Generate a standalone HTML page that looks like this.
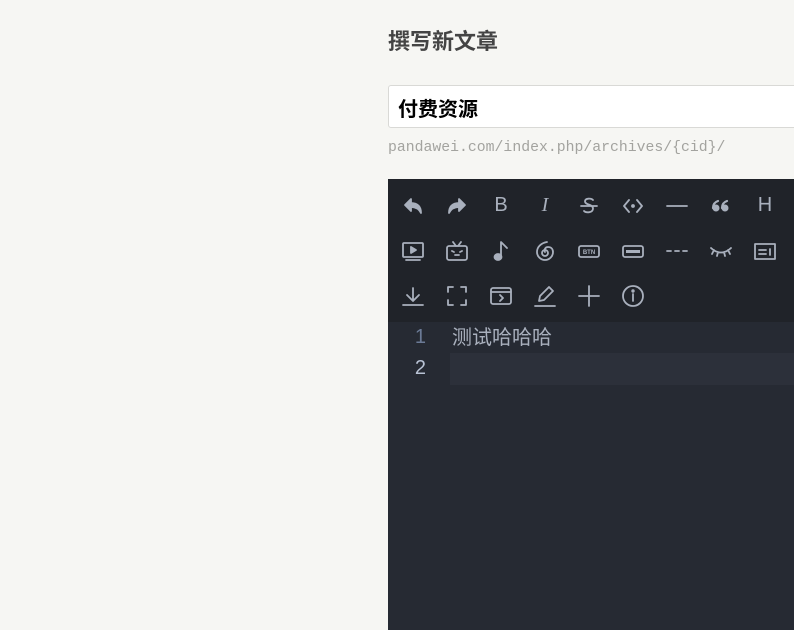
<!DOCTYPE html>
<html><head><meta charset="utf-8"><style>
body{margin:0;width:794px;height:630px;background:#f6f6f3;overflow:hidden;position:relative;font-family:"Liberation Sans","Noto Sans CJK SC",sans-serif}
h1{position:absolute;left:388px;top:24px;margin:0;font-size:22px;font-weight:bold;color:#444}
.title{position:absolute;left:388px;top:85px;width:420px;height:43px;background:#fff;border:1px solid #d9d9d6;border-radius:3px;box-sizing:border-box;font-size:20px;font-weight:bold;color:#000;padding:7px 0 0 9px}
.url{position:absolute;left:388px;top:140px;font-family:"Liberation Mono",monospace;font-size:14.8px;color:#a3a39f}
.ed{position:absolute;left:388px;top:179px;width:406px;height:451px;background:#262a33}
.tb{position:absolute;left:0;top:0;width:406px;height:143px;background:#202329}
.tb svg{position:absolute;width:22px;height:22px;fill:none;stroke:#a9b0bd;stroke-width:1.8;stroke-linecap:round;stroke-linejoin:round}
.tb .t{position:absolute;color:#a9b0bd;font-size:20px;width:22px;text-align:center}
.ln{position:absolute;left:0;width:38px;text-align:right;font-size:20px;color:#6b7a96}
.l2{position:absolute;left:62px;top:174px;width:344px;height:32px;background:#2c303a}
.code{position:absolute;left:64px;top:142px;font-size:20px;color:#a9b0bd}
</style></head><body>
<h1>撰写新文章</h1>
<div class="title">付费资源</div>
<div class="url">pandawei.com/index.php/archives/{cid}/</div>
<div class="ed">
<div class="tb">
<svg style="left:14px;top:16px" viewBox="0 0 22 22"><path d="M9 4L3 10l6 6V12c5 0 8 2 10 6 0-6-3-10-10-10z" fill="#a9b0bd"/></svg>
<svg style="left:58px;top:16px" viewBox="0 0 22 22"><path d="M13 4l6 6-6 6V12c-5 0-8 2-10 6 0-6 3-10 10-10z" fill="#a9b0bd"/></svg>
<div class="t" style="left:102px;top:15px">B</div>
<div class="t" style="left:146px;top:15px;font-family:'Liberation Serif',serif;font-style:italic">I</div>
<svg style="left:190px;top:16px" viewBox="0 0 22 22"><path d="M15 5c-2-2-8-2-8 1.5S15 9 15 13.5 8 18 6 16M3 11h16"/></svg>
<svg style="left:234px;top:16px" viewBox="0 0 22 22"><path d="M7 5l-5 6 5 6M15 5l5 6-5 6"/><circle cx="11" cy="11" r="1" fill="#a9b0bd"/></svg>
<svg style="left:278px;top:16px" viewBox="0 0 22 22"><path d="M1 11h20"/></svg>
<svg style="left:322px;top:16px" viewBox="0 0 22 22"><circle cx="6" cy="13" r="3.5" fill="#a9b0bd" stroke="none"/><circle cx="15" cy="13" r="3.5" fill="#a9b0bd" stroke="none"/><path d="M3 13c0-4 2-6 5-7M12 13c0-4 2-6 5-7" stroke-width="2.2"/></svg>
<div class="t" style="left:366px;top:15px">H</div>
<svg style="left:14px;top:61px" viewBox="0 0 22 22"><rect x="1" y="3" width="20" height="14" rx="1"/><path d="M4 20h14"/><path d="M9 7v6l5-3z" fill="#a9b0bd"/></svg>
<svg style="left:58px;top:61px" viewBox="0 0 22 22"><rect x="1" y="6" width="20" height="14" rx="2"/><path d="M7 2l3 4M15 2l-3 4M6 11l2 1M16 11l-2 1M9 15h4"/></svg>
<svg style="left:102px;top:61px" viewBox="0 0 22 22"><path d="M11 17V2l6 6"/><ellipse cx="8" cy="17" rx="3.5" ry="3" fill="#a9b0bd"/></svg>
<svg style="left:146px;top:61px" viewBox="0 0 22 22"><path d="M13 2c-6 1-10 5-10 10a8 8 0 0 0 16 0c0-3-2-5-5-5s-4 3-3 5"/><circle cx="11" cy="13" r="3"/></svg>
<svg style="left:190px;top:61px" viewBox="0 0 22 22"><rect x="1" y="6" width="20" height="11" rx="2"/><text x="11" y="14" font-size="6" fill="#a9b0bd" stroke="none" text-anchor="middle" font-weight="bold" font-family="Liberation Sans">BTN</text></svg>
<svg style="left:234px;top:61px" viewBox="0 0 22 22"><rect x="1" y="6" width="20" height="11" rx="2"/><rect x="4" y="10" width="14" height="3" fill="#a9b0bd" stroke="none"/></svg>
<svg style="left:278px;top:61px" viewBox="0 0 22 22"><path d="M1 11h4M9 11h4M17 11h4"/></svg>
<svg style="left:322px;top:61px" viewBox="0 0 22 22"><path d="M1 8c6 6 14 6 20 0M4 10l-2 4M8 12l-1 4M14 12l1 4M18 10l2 4"/></svg>
<svg style="left:366px;top:61px" viewBox="0 0 22 22"><rect x="1" y="4" width="20" height="15"/><path d="M5 10h7M5 14h7M16 9v6"/></svg>
<svg style="left:14px;top:106px" viewBox="0 0 22 22"><path d="M11 3v12M5 10l6 6 6-6M1 20h20"/></svg>
<svg style="left:58px;top:106px" viewBox="0 0 22 22"><path d="M2 7V2h5M15 2h5v5M20 15v5h-5M7 20H2v-5"/></svg>
<svg style="left:102px;top:106px" viewBox="0 0 22 22"><rect x="1" y="3" width="20" height="16" rx="2"/><path d="M1 7h20M10 10l3 3-3 3"/></svg>
<svg style="left:146px;top:106px" viewBox="0 0 22 22"><path d="M5 16l1-5 9-9 4 4-9 9zM1 21h20"/></svg>
<svg style="left:190px;top:106px" viewBox="0 0 22 22"><path d="M11 1v20M1 11h20"/></svg>
<svg style="left:234px;top:106px" viewBox="0 0 22 22"><circle cx="11" cy="11" r="10"/><path d="M11 9v7"/><circle cx="11" cy="6" r=".8" fill="#a9b0bd"/></svg>
</div>
<div class="l2"></div>
<div class="ln" style="top:147px">1</div>
<div class="ln" style="top:178px;color:#b8c2d4">2</div>
<div class="code">测试哈哈哈</div>
</div>
</body></html>
